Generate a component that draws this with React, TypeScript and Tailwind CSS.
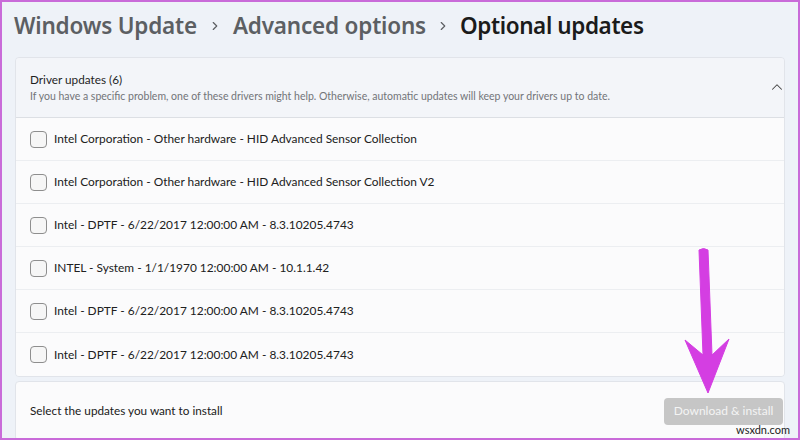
import { ChevronRight, ChevronUp } from "lucide-react";

const drivers = [
	"Intel Corporation - Other hardware - HID Advanced Sensor Collection",
	"Intel Corporation - Other hardware - HID Advanced Sensor Collection V2",
	"Intel - DPTF - 6/22/2017 12:00:00 AM - 8.3.10205.4743",
	"INTEL - System - 1/1/1970 12:00:00 AM - 10.1.1.42",
	"Intel - DPTF - 6/22/2017 12:00:00 AM - 8.3.10205.4743",
	"Intel - DPTF - 6/22/2017 12:00:00 AM - 8.3.10205.4743",
];

const App = () => {
	return (
		<div
			className="relative w-[800px] h-[440px] overflow-hidden border-2 border-[#c96bd9] bg-[#eef2f8] text-[#1c1c1c]"
			style={{ fontFamily: 'Lato, "Noto Sans", sans-serif' }}
		>
			{/* Breadcrumb title */}
			<div
				className="flex items-center h-[48px] pl-[12px] text-[22.5px] font-semibold tracking-[-0.2px]"
				style={{ fontFamily: '"Noto Sans", sans-serif' }}
			>
				<span className="text-[#5c5f63]">Windows Update</span>
				<ChevronRight className="mx-[11px] text-[#5c5f63]" size={14} strokeWidth={2} />
				<span className="text-[#5c5f63]">Advanced options</span>
				<ChevronRight className="mx-[10px] text-[#5c5f63]" size={14} strokeWidth={2} />
				<span className="text-[#1b1b1b] tracking-[-0.4px]">Optional updates</span>
			</div>

			{/* Driver updates card */}
			<div className="mx-[13px] mt-[7px] rounded-[4px] border border-[#e1e4ea] overflow-hidden">
				<div className="flex items-center justify-between h-[60px] px-[14px] bg-[#f3f5f9] border-b border-[#dcdfe4]">
					<div className="flex flex-col">
						<span className="text-[11.75px] leading-[18px] text-[#1f1f1f]">Driver updates (6)</span>
						<span className="text-[10.5px] leading-[15px] text-[#727478]">
							If you have a specific problem, one of these drivers might help. Otherwise, automatic updates will keep your drivers up to date.
						</span>
					</div>
					<ChevronUp className="-mr-[16px] -mt-[2px] text-[#444]" size={18} strokeWidth={1.4} />
				</div>
				{drivers.map((d, i) => (
					<div
						key={i}
						className="flex items-center gap-[7px] h-[43px] px-[14px] bg-[#fbfbfc] border-b border-[#eceef1] last:border-b-0"
					>
						<div className="w-[17px] h-[17px] rounded-[4px] border border-[#8e8e8e] bg-[#f6f6f6]" />
						<span className="text-[11.9px] text-[#202020]">{d}</span>
					</div>
				))}
			</div>

			{/* Footer */}
			<div className="mx-[13px] mt-[4px] h-[60px] flex items-center justify-between px-[14px] rounded-[4px] border border-[#e1e4ea] bg-[#fbfbfc]">
				<span className="text-[11.75px] text-[#202020]">Select the updates you want to install</span>
				<button className="w-[119px] h-[27px] rounded-[4px] bg-[#c6c6c6] text-[12px] text-[#f4f4f4] -mr-[13px]">
					Download &amp; install
				</button>
			</div>

			{/* Annotation arrow */}
			<svg className="absolute left-[670px] top-[240px]" width="70" height="160" viewBox="0 0 70 160">
				<path
					d="M27 8 Q31.5 5 36 8 L40 113 L57 97 L36 151 L13 98 L31 113 Z"
					fill="#d43ee2"
					stroke="#d43ee2"
					strokeWidth="1"
					strokeLinejoin="round"
				/>
			</svg>

			<span className="absolute right-[8px] bottom-[0px] text-[11px] text-[#222]">wsxdn.com</span>
		</div>
	);
};

export default App;
